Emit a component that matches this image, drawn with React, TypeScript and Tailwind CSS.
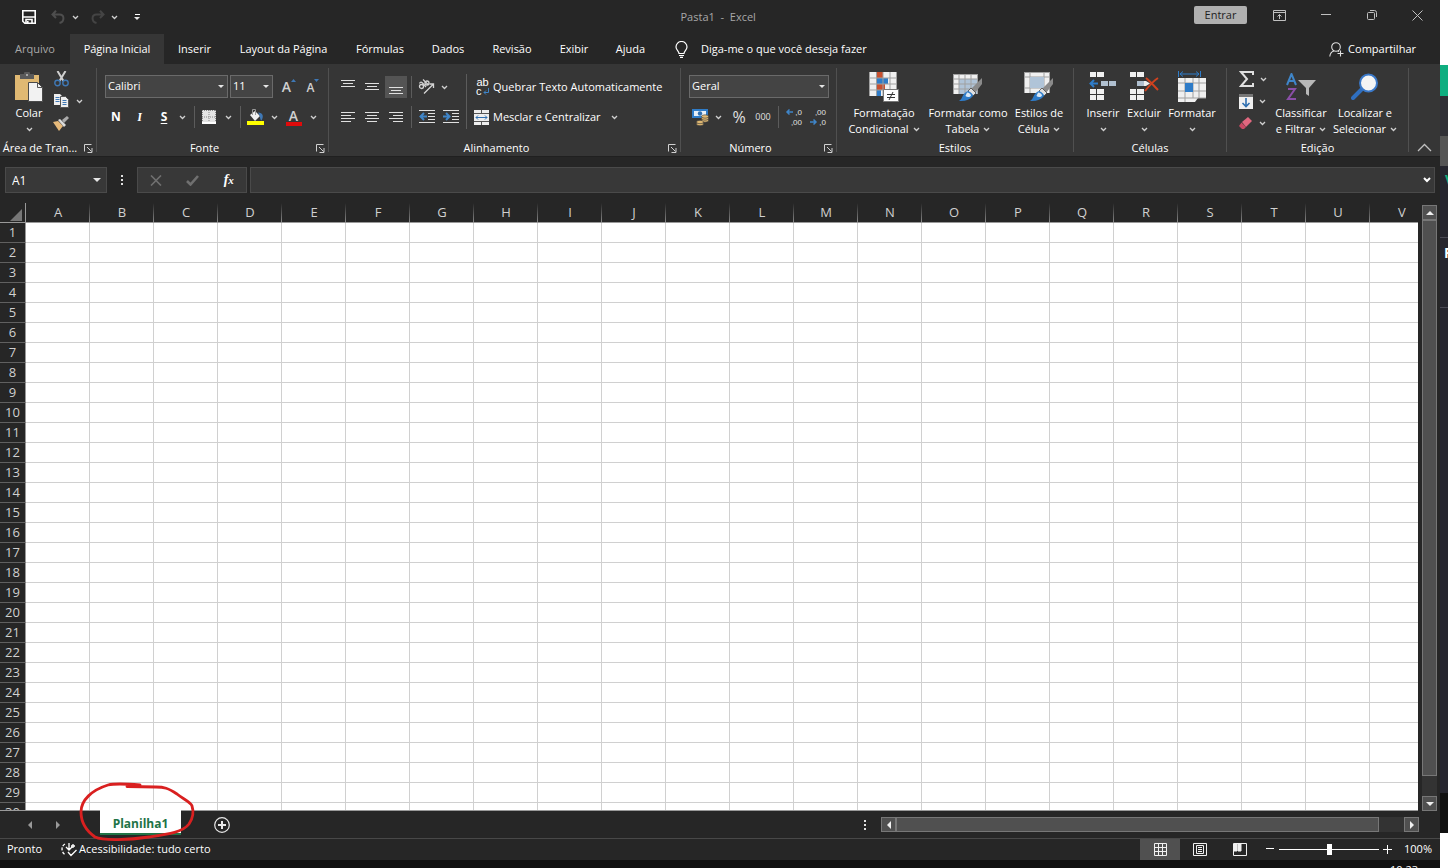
import type { ReactNode } from "react";

const tabs = [
  { name: "Arquivo", style: "w-[70px] text-[#a8a8a8]" },
  { name: "Página Inicial", style: "w-[94px] bg-[#363636] text-white" },
  { name: "Inserir", style: "w-[61px] text-white" },
  { name: "Layout da Página", style: "w-[117px] text-white" },
  { name: "Fórmulas", style: "w-[76px] text-white" },
  { name: "Dados", style: "w-[60px] text-white" },
  { name: "Revisão", style: "w-[68px] text-white" },
  { name: "Exibir", style: "w-[56px] text-white" },
  { name: "Ajuda", style: "w-[57px] text-white" },
];

const columns = "ABCDEFGHIJKLMNOPQRSTUV".split("");
const rows = Array.from({ length: 30 }, (_, i) => i + 1);

function Chevron() {
  return (
    <svg width="7" height="5" viewBox="0 0 7 5" fill="none" stroke="#d0d0d0" strokeWidth="1.300" className="shrink-0">
      <path d="M1 1l2.500 2.500L6 1" />
    </svg>
  );
}

function Triangle({ size = "w-[7px]" }: { size?: string }) {
  return (
    <svg viewBox="0 0 8 4" fill="#e6e6e6" className={size}>
      <path d="M0 0h8L4 4z" />
    </svg>
  );
}

function Tool({ label, w, children }: { label: string; w: string; children: ReactNode }) {
  return (
    <button aria-label={label} className={`flex h-[22px] shrink-0 items-center justify-center ${w}`}>
      {children}
    </button>
  );
}

function Line() {
  return <div className="h-[22px] w-px shrink-0 bg-[#5c5c5c]" />;
}

function Launcher() {
  return (
    <button aria-label="Mais opções" className="flex w-4 justify-center">
      <svg width="9" height="9" viewBox="0 0 9 9" fill="none" stroke="#d0d0d0">
        <path d="M.5 7.500V.5h7M3 3l4.500 4.500M8 4v4.500H3.500" />
      </svg>
    </button>
  );
}

function Group({ title, w, launcher, children }: { title: string; w: string; launcher?: boolean; children: ReactNode }) {
  return (
    <section className={`flex shrink-0 ${w}`}>
      <div className="flex min-w-0 flex-1 flex-col">
        <div className="flex h-[72px]">{children}</div>
        <div className="flex h-4 items-center">
          <h2 className="flex-1 text-center whitespace-nowrap">{title}</h2>
          {launcher && <Launcher />}
        </div>
      </div>
      <div className="h-[84px] w-px bg-[#505050]" />
    </section>
  );
}

/* big ribbon button: icon on top, one or two lines of text */
function BigButton({ lines, w, children }: { lines: string[]; w: string; children: ReactNode }) {
  return (
    <button className={`flex shrink-0 flex-col items-center pt-1 leading-4 whitespace-nowrap ${w}`}>
      <span className="mb-[3px] flex h-[30px] items-center">{children}</span>
      <span>{lines[0]}</span>
      <span className="flex h-4 items-center gap-1">
        {lines[1]}
        <Chevron />
      </span>
    </button>
  );
}

function Lines({ d }: { d: string }) {
  return (
    <svg width="14" height="14" viewBox="0 0 14 14" stroke="#e0e0e0" fill="none">
      <path d={d} />
    </svg>
  );
}

function Brush() {
  return (
    <g>
      <path d="M29 6v6L22 21l-4-4z" fill="#8a8a8a" />
      <path d="M18 16l5 5-3 3-5-5z" fill="#e0e0e0" stroke="#363636" strokeWidth=".7" />
      <path d="M15 19c3 1 5 3 5 5-3 4-8 5.500-14 5 4-2 3-8 9-10z" fill="#2f7cc8" />
      <path d="M14 20.500c2 0 4 1.500 4 3-1 2-4 2-5.500 .5z" fill="#d8e8f6" />
    </g>
  );
}

function TitleBar() {
  return (
    <header className="flex h-[34px] items-center">
      <div className="flex flex-1 items-center pl-[22px]">
        <button aria-label="Salvar">
          <svg width="14" height="14" viewBox="0 0 14 14" fill="none" stroke="#fff" strokeWidth="1.600">
            <path d="M.8.8h12.400v12.400H2.800L.8 11.200zM1 7h12M4 13V9.500h6V13" />
            <path d="M5.800 11v2" />
          </svg>
        </button>
        <button aria-label="Desfazer" className="ml-[15px]">
          <svg width="14" height="14" viewBox="0 0 14 14" fill="none" stroke="#4e4e4e" strokeWidth="2">
            <path d="M5 .8L1.500 4.500 5 8M2 4.500h6.500c5 0 5.500 7 0 8.500" />
          </svg>
        </button>
        <button aria-label="Opções de desfazer" className="ml-[7px]"><Chevron /></button>
        <button aria-label="Refazer" className="ml-3">
          <svg width="14" height="14" viewBox="0 0 14 14" fill="none" stroke="#444" strokeWidth="2">
            <path d="M9 .8l3.500 3.700L9 8M12 4.500H5.500c-5 0-5.500 7 0 8.500" />
          </svg>
        </button>
        <button aria-label="Opções de refazer" className="ml-[6px]"><Chevron /></button>
        <button aria-label="Personalizar barra" className="ml-4 flex flex-col items-center gap-[2px]">
          <span className="h-px w-[5px] bg-white" />
          <Triangle size="w-[6px]" />
        </button>
      </div>
      <h1 className="w-[84px] whitespace-pre text-[#a8a8a8]">Pasta1  -  Excel</h1>
      <div className="flex flex-1 items-center justify-end pr-[17px] pb-1">
        <button className="h-[18px] w-[53px] rounded-xs bg-[#b0b0b0] text-[#1e1e1e]">Entrar</button>
        <button aria-label="Opções da faixa" className="ml-[26px]">
          <svg width="13" height="11" viewBox="0 0 13 11" fill="none" stroke="#c0c0c0">
            <path d="M.5.5h12v10H.5zM.5 2.500h12M6.500 9V4.500M4.500 6.500l2-2 2 2" />
          </svg>
        </button>
        <button aria-label="Minimizar" className="ml-[35px]">
          <svg width="10" height="10" viewBox="0 0 10 10" stroke="#c0c0c0"><path d="M0 4.500h10" /></svg>
        </button>
        <button aria-label="Restaurar" className="ml-9">
          <svg width="10" height="10" viewBox="0 0 10 10" fill="none" stroke="#c0c0c0">
            <rect x=".5" y="2.500" width="7" height="7" rx="1" />
            <path d="M3 .5h4.500a2 2 0 0 1 2 2V7" />
          </svg>
        </button>
        <button aria-label="Fechar" className="ml-[35px]">
          <svg width="11" height="11" viewBox="0 0 11 11" stroke="#c0c0c0"><path d="M.5.5l10 10M10.500.5l-10 10" /></svg>
        </button>
      </div>
    </header>
  );
}

function TabBar() {
  return (
    <nav className="flex h-[30px] items-stretch">
      {tabs.map((tab) => (
        <button key={tab.name} className={`shrink-0 whitespace-nowrap ${tab.style}`}>
          {tab.name}
        </button>
      ))}
      <button className="ml-4 flex items-center gap-[13px] whitespace-nowrap">
        <svg width="13" height="17" viewBox="0 0 13 17" fill="none" stroke="#fff" strokeWidth="1.200">
          <path d="M4 12.500c0-2.500-3-3.500-3-6.500a5.500 5.500 0 0 1 11 0c0 3-3 4-3 6.500zM4 14.500h5M5 16.400h3" />
        </svg>
        Diga-me o que você deseja fazer
      </button>
      <button className="mr-6 ml-auto flex items-center gap-1">
        <svg width="15" height="15" viewBox="0 0 15 15" fill="none" stroke="#e0e0e0" strokeWidth="1.100">
          <circle cx="7" cy="5" r="4.300" />
          <path d="M.8 14.500c.3-3 2-5 4.200-5.500M9 9l1 .6M11.500 8.500v6M8.500 11.500h6" />
        </svg>
        Compartilhar
      </button>
    </nav>
  );
}

function Clipboard() {
  return (
    <Group title="Área de Tran..." w="w-[97px]" launcher>
      <BigButton lines={["Colar"]} w="w-[50px] pl-2 [&>span:last-child]:gap-0">
        <svg width="30" height="30" viewBox="0 0 30 30">
          <path d="M1 3h24v25H1z" fill="#e0b973" />
          <path d="M6 7V2h4a3 3 0 0 1 6 0h4v5z" fill="#5a5a5a" />
          <circle cx="13" cy="3" r="1" fill="#c0c0c0" />
          <path d="M14.500 10.500h9l5 5v14h-14z" fill="#f2f2f2" stroke="#4a4a4a" />
          <path d="M23.500 10.500v5h5" fill="none" stroke="#555" />
        </svg>
      </BigButton>
      <div className="flex flex-col">
        <Tool label="Recortar" w="w-[22px]">
          <svg width="15" height="16" viewBox="0 0 15 16" fill="none">
            <path d="M3.500 0l6 10M11.500 0l-6 10" stroke="#d0d0d0" strokeWidth="2" />
            <circle cx="3.500" cy="12" r="2.700" stroke="#3f78b5" strokeWidth="1.400" />
            <circle cx="11.500" cy="12" r="2.700" stroke="#3f78b5" strokeWidth="1.400" />
          </svg>
        </Tool>
        <div className="flex">
          <Tool label="Copiar" w="w-[22px]">
            <svg width="15" height="14" viewBox="0 0 15 14" stroke="#3f78b5">
              <path d="M0 0h6l2 2v9H0z" fill="#eee" stroke="none" />
              <path d="M1.500 3.500h4M1.500 5.500h4M1.500 7.500h4" />
              <path d="M6.500 2.500h5l3 3v8h-8z" fill="#eee" stroke="#555" />
              <path d="M8.500 6.500h4M8.500 8.500h4M8.500 10.500h4" />
            </svg>
          </Tool>
          <Tool label="Opções de cópia" w="w-[14px]"><Chevron /></Tool>
        </div>
        <Tool label="Pincel" w="w-[22px]">
          <svg width="16" height="15" viewBox="0 0 16 15">
            <path d="M0 6l5-1 5 5-4 5z" fill="#e6b97a" />
            <path d="M5 4l2-1 6 6-2 2z" fill="#ddd" />
            <path d="M9 4l5-4 2 2-5 5z" fill="#aaa" />
          </svg>
        </Tool>
      </div>
    </Group>
  );
}

function FontGroup() {
  return (
    <Group title="Fonte" w="w-[232px]" launcher>
      <div className="flex flex-col gap-2 pt-[7px] pl-2">
        <div className="flex h-[23px] items-center">
          <label className="relative">
            <select aria-label="Fonte" className="h-[23px] w-[123px] appearance-none border border-[#6a6a6a] bg-[#444] pl-[2px]">
              <option>Calibri</option>
            </select>
            <span className="pointer-events-none absolute top-[10px] right-[4px]"><Triangle size="w-[6px]" /></span>
          </label>
          <label className="relative ml-[2px]">
            <select aria-label="Tamanho" className="h-[23px] w-[43px] appearance-none border border-[#6a6a6a] bg-[#444] pl-[2px]">
              <option>11</option>
            </select>
            <span className="pointer-events-none absolute top-[10px] right-[4px]"><Triangle size="w-[6px]" /></span>
          </label>
          <Tool label="Aumentar fonte" w="ml-[4px] w-[24px]">
            <span className="text-sm leading-4 font-semibold text-[#d0d0d0]">A</span>
            <svg width="5" height="16" viewBox="0 0 5 16" fill="#3f78b5"><path d="M0 3l2.500-3L5 3z" /></svg>
          </Tool>
          <Tool label="Diminuir fonte" w="w-[24px]">
            <span className="pt-[2px] text-xs leading-4 font-semibold text-[#d0d0d0]">A</span>
            <svg width="5" height="16" viewBox="0 0 5 16" fill="#3f78b5"><path d="M0 0h5L2.500 3z" /></svg>
          </Tool>
        </div>
        <div className="flex items-center text-xs">
          <Tool label="Negrito" w="w-[22px] font-bold">N</Tool>
          <Tool label="Itálico" w="w-[25px] font-serif italic font-bold">I</Tool>
          <Tool label="Sublinhado" w="w-[24px] font-bold underline underline-offset-2">S</Tool>
          <Tool label="Opções de sublinhado" w="w-[12px]"><Chevron /></Tool>
          <div className="w-[6px]" />
          <Line />
          <Tool label="Bordas" w="w-[28px]">
            <svg width="14" height="14" viewBox="0 0 14 14">
              <path d="M0 0h14v14H0z" fill="#e4e4e4" />
              <path d="M0 .5h14M0 7h14M.5 0v14M7 0v14M13.500 0v14" stroke="#888" strokeDasharray="1 1" />
              <path d="M0 13h14" stroke="#fff" strokeWidth="2" />
            </svg>
          </Tool>
          <Tool label="Opções de bordas" w="w-[10px]"><Chevron /></Tool>
          <div className="w-[7px]" />
          <Line />
          <Tool label="Cor de preenchimento" w="w-[29px]">
            <svg width="17" height="17" viewBox="0 0 17 17">
              <path d="M3 6l5-4 5 5-5 5z" fill="#f0f0f0" />
              <path d="M5.500 6V.5h3V6" fill="none" stroke="#999" />
              <path d="M11 3.500c5 0 6 4 3.500 8-2-1-1-5-3.500-8z" fill="#3f78b5" />
              <path d="M0 12h17v4H0z" fill="#ff0" />
            </svg>
          </Tool>
          <Tool label="Opções de preenchimento" w="w-[8px]"><Chevron /></Tool>
          <Tool label="Cor da fonte" w="w-[31px]">
            <span className="flex w-4 flex-col items-center border-b-4 border-[#e00b0b] text-sm leading-[13px] font-semibold text-[#d0d0d0]">A</span>
          </Tool>
          <Tool label="Opções de cor" w="w-[8px]"><Chevron /></Tool>
        </div>
      </div>
    </Group>
  );
}

function AlignGroup() {
  return (
    <Group title="Alinhamento" w="w-[352px]" launcher>
      <div className="flex flex-col gap-2 pt-2 pl-[7px]">
        <div className="flex items-center">
          <Tool label="Em cima" w="w-6"><Lines d="M0 .5h14M2 3.500h10M0 6.500h14" /></Tool>
          <Tool label="No meio" w="w-6"><Lines d="M0 3.500h14M2 6.500h10M0 9.500h14" /></Tool>
          <Tool label="Embaixo" w="w-[22px] mx-px bg-[#545454]"><Lines d="M0 7.500h14M2 10.500h10M0 13.500h14" /></Tool>
          <div className="w-[3px]" />
          <Line />
          <Tool label="Orientação" w="w-[28px]">
            <svg width="17" height="16" viewBox="0 0 17 16" fill="none" stroke="#d4d4d4" strokeWidth="1.300">
              <circle cx="3.500" cy="7.500" r="2" />
              <path d="M1.500 4.500c1-2 2-1.500 3-.5l3.500 4" />
              <path d="M5 .5l5.500 5.500" />
              <circle cx="9" cy="4" r="2" />
              <path d="M6 14.500l9-9M11.500 5h4v4" />
            </svg>
          </Tool>
          <Tool label="Opções de orientação" w="w-[8px]"><Chevron /></Tool>
        </div>
        <div className="flex items-center">
          <Tool label="À esquerda" w="w-6"><Lines d="M0 2.500h14M0 5.500h10M0 8.500h14M0 11.500h10" /></Tool>
          <Tool label="Centralizar" w="w-6"><Lines d="M0 2.500h14M2 5.500h10M0 8.500h14M2 11.500h10" /></Tool>
          <Tool label="À direita" w="w-6"><Lines d="M0 2.500h14M4 5.500h10M0 8.500h14M4 11.500h10" /></Tool>
          <div className="w-[3px]" />
          <Line />
          <Tool label="Diminuir recuo" w="ml-[3px] w-6">
            <svg width="16" height="14" viewBox="0 0 16 14" fill="none" stroke="#e0e0e0">
              <path d="M0 .5h16M9 3.500h7M9 6.500h7M9 9.500h7M0 12.500h16" />
              <path d="M8 6.500H2M5 3L1.500 6.500 5 10" stroke="#3f85c8" strokeWidth="2" />
            </svg>
          </Tool>
          <Tool label="Aumentar recuo" w="w-6">
            <svg width="16" height="14" viewBox="0 0 16 14" fill="none" stroke="#e0e0e0">
              <path d="M0 .5h16M9 3.500h7M9 6.500h7M9 9.500h7M0 12.500h16" />
              <path d="M0 6.500h6M3 3l3.500 3.500L3 10" stroke="#3f85c8" strokeWidth="2" />
            </svg>
          </Tool>
        </div>
      </div>
      <div className="mt-[6px] ml-[3px] h-[55px] w-px bg-[#5c5c5c]" />
      <div className="flex flex-col gap-2 pt-2 pl-[7px]">
        <button className="flex h-[22px] items-center gap-1 whitespace-nowrap">
          <span className="flex w-[15px] flex-col pl-[2px] font-['Liberation_Sans',sans-serif] text-[11px] leading-[9px]">
            <span>ab</span>
            <span className="flex">
              c
              <svg width="6" height="8" viewBox="0 0 6 8" fill="none" stroke="#3f85c8" className="ml-px"><path d="M5.500 1v4.500H1M3 3.500l-2 2 2 2" /></svg>
            </span>
          </span>
          Quebrar Texto Automaticamente
        </button>
        <button className="flex h-[22px] items-center gap-1 whitespace-nowrap">
          <svg width="15" height="15" viewBox="0 0 15 15">
            <path d="M0 0h15v15H0z" fill="#eee" />
            <path d="M0 3.500h15M0 11.500h15M7.500 0v3.500M7.500 11.500V15" stroke="#555" />
            <path d="M2 7.500h11M4 5.500l-2 2 2 2M11 5.500l2 2-2 2" stroke="#2f6fb0" fill="none" />
          </svg>
          Mesclar e Centralizar
          <span className="pl-[6px]"><Chevron /></span>
        </button>
      </div>
    </Group>
  );
}

function Decimal({ top, bottom, arrow }: { top: string; bottom: string; arrow: string }) {
  return (
    <svg width="17" height="20" viewBox="0 0 17 20" fill="none" stroke="#3f85c8" strokeWidth="1.500" className="overflow-visible">
      <path d={arrow} />
      <g fill="#e0e0e0" stroke="none" fontSize="8" textAnchor="end" className="font-['Liberation_Sans',sans-serif]">
        <text x="16" y="8">{top}</text>
        <text x="16" y="18">{bottom}</text>
      </g>
    </svg>
  );
}

function NumberGroup() {
  return (
    <Group title="Número" w="w-[156px]" launcher>
      <div className="flex flex-col gap-2 pt-[7px] pl-2">
        <label className="relative h-[23px]">
          <select aria-label="Formato" className="h-[23px] w-[140px] appearance-none border border-[#6a6a6a] bg-[#444] pl-[2px]">
            <option>Geral</option>
          </select>
          <span className="pointer-events-none absolute top-[10px] right-[4px]"><Triangle size="w-[6px]" /></span>
        </label>
        <div className="flex items-center">
          <Tool label="Moeda" w="w-[23px]">
            <svg width="17" height="17" viewBox="0 0 17 17">
              <path d="M0 0h16v9H0z" fill="#2f7cc8" />
              <path d="M2 2h12v5H2z" fill="#e8f0f8" />
              <circle cx="8" cy="4.500" r="2.200" fill="#2f6fb0" />
              <g fill="#e0b973" stroke="#363636" strokeWidth=".6">
                <ellipse cx="13" cy="11.500" rx="3.500" ry="1.700" /><ellipse cx="13" cy="9.500" rx="3.500" ry="1.700" />
                <ellipse cx="13" cy="7.500" rx="3.500" ry="1.700" /><ellipse cx="8" cy="15" rx="3.500" ry="1.700" />
                <ellipse cx="8" cy="13" rx="3.500" ry="1.700" />
              </g>
            </svg>
          </Tool>
          <Tool label="Opções de moeda" w="w-[12px]"><Chevron /></Tool>
          <Tool label="Porcentagem" w="w-[30px] text-base text-[#e0e0e0]">%</Tool>
          <Tool label="Milhar" w="w-[18px] text-[9px] text-[#e0e0e0]">000</Tool>
          <div className="w-[6px]" />
          <Line />
          <Tool label="Aumentar casas" w="ml-[3px] w-[25px]"><Decimal top=",0" bottom=",00" arrow="M7 5H1M3.500 2.500L1 5l2.500 2.500" /></Tool>
          <Tool label="Diminuir casas" w="w-[22px]"><Decimal top=",00" bottom=",0" arrow="M0 15h6M3.500 12.500L6 15l-2.500 2.500" /></Tool>
        </div>
      </div>
    </Group>
  );
}

function StylesGroup() {
  return (
    <Group title="Estilos" w="w-[237px]">
      <div className="flex pl-[7px]">
        <BigButton lines={["Formatação", "Condicional"]} w="w-[80px]">
          <svg width="30" height="30" viewBox="0 0 30 30">
            <path d="M0 0h28v24H0z" fill="#f0f0f0" />
            <path d="M8 0h6v6H8zM8 12h8v6H8z" fill="#c8502f" />
            <path d="M8 6h11v6H8zM8 18h4v6H8z" fill="#2f7cc8" />
            <path d="M0 6h28M0 12h28M0 18h28M7.500 0v24M14 0v24M21 0v24M.5 0v24M27.500 0v24" stroke="#a0a0a0" fill="none" />
            <path d="M14.500 17.500h15v12h-15z" fill="#fff" stroke="#777" />
            <path d="M18 22.500h8M18 25.500h8M24 20l-4 8" stroke="#333" />
          </svg>
        </BigButton>
        <BigButton lines={["Formatar como", "Tabela"]} w="w-[88px]">
          <svg width="30" height="30" viewBox="0 0 30 30">
            <path d="M0 2h25v20H0z" fill="#f0f0f0" />
            <path d="M6 7h19v15H6z" fill="#b0c4d8" />
            <path d="M0 2.500h25M0 7h25M0 12h25M0 17h25M.5 2v20M6 2v20M12 2v20M18 2v20M24.500 2v20" stroke="#a0a0a0" fill="none" />
            <Brush />
          </svg>
        </BigButton>
        <BigButton lines={["Estilos de", "Célula"]} w="w-[54px]">
          <svg width="30" height="30" viewBox="0 0 30 30">
            <path d="M0 0h26v21H0z" fill="#f0f0f0" />
            <path d="M0 .5h26M0 5h26M0 16h26M.5 0v21M6 0v21M20 0v21M25.500 0v21" stroke="#a0a0a0" fill="none" />
            <path d="M6 5h14v11H6z" fill="#b0c4d8" />
            <Brush />
          </svg>
        </BigButton>
      </div>
    </Group>
  );
}

function CellsGroup() {
  return (
    <Group title="Células" w="w-[153px]">
      <div className="flex pl-[9px]">
        <BigButton lines={["Inserir"]} w="w-[40px] [&>span:last-child]:gap-0">
          <svg width="28" height="30" viewBox="0 0 28 30" fill="#f0f0f0">
            <path d="M1 0h6v5H1zM8 0h7v5H8zM1 17h6v5H1zM8 17h7v5H8zM1 23h6v5H1zM8 23h7v5H8z" />
            <path d="M12 9h7v5h-7zM20 9h7v5h-7z" fill="#b0c0d0" />
            <path d="M9 11.500H2M5 8l-3.500 3.500L5 15" stroke="#2f7cc8" strokeWidth="2" fill="none" />
          </svg>
        </BigButton>
        <BigButton lines={["Excluir"]} w="w-[42px]">
          <svg width="30" height="30" viewBox="0 0 30 30" fill="#f0f0f0">
            <path d="M1 0h6v5H1zM8 0h7v5H8zM1 17h6v5H1zM8 17h7v5H8zM1 23h6v5H1zM8 23h7v5H8z" />
            <path d="M8 9h7v5H8z" fill="#b0c0d0" />
            <path d="M15 9h2l4 2.500-4 2.500h-2z" />
            <path d="M17 6c4 3 8 8 12 12M29 6c-5 3-9 8-13 13" stroke="#d0421f" strokeWidth="2" fill="none" />
          </svg>
        </BigButton>
        <BigButton lines={["Formatar"]} w="w-[54px]">
          <svg width="28" height="32" viewBox="0 0 28 32">
            <path d="M.5 0v6M22.500 0v6M2 3h19M5 .5L2 3l3 2.500M18 .5L21 3l-3 2.500" stroke="#2f7cc8" fill="none" />
            <path d="M0 7h28v20h-8l-3 4H0z" fill="#f0f0f0" />
            <path d="M0 12h28M0 20h28M0 27h28M7 7v24M15 7v20M21 7v20" stroke="#a0a0a0" fill="none" />
            <path d="M7 12h8v9H7z" fill="#2f7cc8" />
          </svg>
        </BigButton>
      </div>
    </Group>
  );
}

function EditGroup() {
  return (
    <Group title="Edição" w="w-[182px]">
      <div className="flex w-[44px] flex-col pl-[7px]">
        <Tool label="Soma" w="w-[37px] gap-[6px]">
          <svg width="15" height="16" viewBox="0 0 15 16" fill="none" stroke="#e0e0e0" strokeWidth="2">
            <path d="M14 4V1H2l6 7-6 7h12v-3" />
          </svg>
          <Chevron />
        </Tool>
        <Tool label="Preencher" w="w-[37px] gap-[6px]">
          <svg width="14" height="15" viewBox="0 0 14 15">
            <path d="M0 0h14v3H0z" fill="#777" />
            <path d="M0 3h14v12H0z" fill="#f0f0f0" />
            <path d="M7 4v8M3.500 9L7 12.500 10.500 9" stroke="#2f6fb0" strokeWidth="1.600" fill="none" />
          </svg>
          <Chevron />
        </Tool>
        <Tool label="Limpar" w="w-[37px] gap-[6px]">
          <svg width="14" height="14" viewBox="0 0 14 14">
            <path d="M3 6l6-5 4 4-6 6z" fill="#e0687f" />
            <path d="M2.500 6.500l4.500 4.500-2 2H3l-3-3z" fill="#c84a64" />
          </svg>
          <Chevron />
        </Tool>
      </div>
      <BigButton lines={["Classificar", "e Filtrar"]} w="w-[60px]">
        <svg width="30" height="28" viewBox="0 0 30 28" fill="none" strokeWidth="2">
          <path d="M1 12L5.500 1 10 12M2.500 8h6" stroke="#3f85c8" />
          <path d="M2 16h7L2 26h8" stroke="#8b4fa8" />
          <path d="M12 7h18l-7 8v8l-3-2v-6z" fill="#b8b8b8" />
        </svg>
      </BigButton>
      <BigButton lines={["Localizar e", "Selecionar"]} w="w-[68px]">
        <svg width="28" height="28" viewBox="0 0 28 28">
          <path d="M11 16l-9 9" stroke="#2f6fc0" strokeWidth="4" strokeLinecap="round" />
          <circle cx="17.500" cy="10" r="8.500" fill="#f4f4f4" stroke="#3a78c8" strokeWidth="2" />
        </svg>
      </BigButton>
    </Group>
  );
}

function Ribbon() {
  return (
    <div className="flex h-[93px] shrink-0 border-b border-[#202020] bg-[#363636] pt-1">
      <Clipboard />
      <FontGroup />
      <AlignGroup />
      <NumberGroup />
      <StylesGroup />
      <CellsGroup />
      <EditGroup />
      <button aria-label="Recolher" className="mt-auto mr-2 mb-1 ml-auto">
        <svg width="15" height="9" viewBox="0 0 15 9" fill="none" stroke="#c0c0c0" strokeWidth="1.300">
          <path d="M1 8l6.500-6.500L14 8" />
        </svg>
      </button>
    </div>
  );
}

function FormulaBar() {
  return (
    <div className="flex h-[46px] shrink-0 items-center pr-[5px] pl-[5px]">
      <label className="relative">
        <input aria-label="Caixa de nome" defaultValue="A1" className="block h-[26px] w-[102px] border border-[#4a4a4a] bg-[#383838] pl-[6px] text-xs" />
        <span className="absolute top-[11px] right-[6px]"><Triangle size="w-2" /></span>
      </label>
      <svg width="30" height="12" viewBox="0 0 30 12" fill="#e0e0e0">
        <path d="M14 1h2v2h-2zM14 5h2v2h-2zM14 9h2v2h-2z" />
      </svg>
      <div className="flex h-[26px] w-[110px] items-center justify-around border border-[#4a4a4a] bg-[#383838]">
        <button aria-label="Cancelar">
          <svg width="12" height="11" viewBox="0 0 12 11" stroke="#707070" strokeWidth="1.600"><path d="M1 .5l10 10M11 .5l-10 10" /></svg>
        </button>
        <button aria-label="Confirmar">
          <svg width="13" height="11" viewBox="0 0 13 11" stroke="#707070" strokeWidth="2.600" fill="none"><path d="M1 6l3.500 3.500L12 1" /></svg>
        </button>
        <button aria-label="Inserir função" className="font-['Liberation_Serif',serif] text-sm leading-4 font-bold italic">
          f<span className="text-[11px]">x</span>
        </button>
      </div>
      <label className="relative ml-[3px] flex-1">
        <input aria-label="Fórmula" className="block h-[26px] w-full border border-[#4a4a4a] bg-[#383838] px-2" />
        <svg width="8" height="6" viewBox="0 0 8 6" fill="none" stroke="#fff" strokeWidth="2" className="absolute top-[10px] right-1">
          <path d="M1 1l3 3 3-3" />
        </svg>
      </label>
    </div>
  );
}

function Arrow({ d, label }: { d: string; label: string }) {
  return (
    <button aria-label={label} className="flex h-[15px] w-[15px] shrink-0 items-center justify-center border border-[#777] bg-[#505050]">
      <svg width="8" height="8" viewBox="0 0 8 8" fill="#f0f0f0"><path d={d} /></svg>
    </button>
  );
}

function Sheet() {
  return (
    <div className="flex min-h-0 flex-1">
      <div className="min-w-0 flex-1 overflow-hidden border-b border-[#999]">
        <table className="w-[1434px] table-fixed border-separate border-spacing-0 bg-white text-[13px] text-[#d0d0d0]">
          <thead>
            <tr className="bg-[#262626] leading-[19px]">
              <th className="w-[26px] border-r border-b border-[#999] p-0">
                <svg width="12" height="12" viewBox="0 0 12 12" fill="#777" className="mt-1 mr-[3px] ml-auto"><path d="M12 0v12H0z" /></svg>
              </th>
              {columns.map((name) => (
                <th key={name} className="w-16 border-b border-[#999] bg-[linear-gradient(#262626,#888)] bg-[length:1px_100%] bg-right bg-no-repeat p-0 font-normal">
                  {name}
                </th>
              ))}
            </tr>
          </thead>
          <tbody>
            {rows.map((row) => (
              <tr key={row} className="h-5">
                <th className="border-r border-b border-r-[#999] border-b-[#606060] bg-[#262626] p-0 leading-[19px] font-normal">{row}</th>
                {columns.map((name) => (
                  <td key={name} className="border-r border-b border-[#d0d0d0] p-0" />
                ))}
              </tr>
            ))}
          </tbody>
        </table>
      </div>
      <div className="mt-[2px] mr-[3px] ml-1 flex w-[15px] flex-col bg-[#333]">
        <Arrow label="Rolar para cima" d="M0 6h8L4 2z" />
        <div className="mb-5 flex-1 border border-[#777] bg-[#505050]" />
        <Arrow label="Rolar para baixo" d="M0 2h8L4 6z" />
      </div>
    </div>
  );
}

function SheetBar() {
  return (
    <div className="relative flex h-[27px] shrink-0 items-center pr-[21px]">
      <button aria-label="Planilha anterior" className="pl-[26px]">
        <svg width="8" height="8" viewBox="0 0 8 8" fill="#999"><path d="M6 0v8L2 4z" /></svg>
      </button>
      <button aria-label="Próxima planilha" className="pl-5">
        <svg width="8" height="8" viewBox="0 0 8 8" fill="#999"><path d="M2 0v8l4-4z" /></svg>
      </button>
      <button className="-mt-px ml-[38px] h-[25px] w-[81px] self-start border-b-2 border-[#217346] bg-white pt-1 text-xs font-bold text-[#217346]">
        Planilha1
      </button>
      <button aria-label="Nova planilha" className="ml-[33px]">
        <svg width="16" height="16" viewBox="0 0 16 16" fill="none" stroke="#e8e8e8">
          <circle cx="8" cy="8" r="7.300" strokeWidth="1.200" />
          <path d="M4 8h8M8 4v8" strokeWidth="2" />
        </svg>
      </button>
      <svg width="4" height="12" viewBox="0 0 4 12" fill="#e0e0e0" className="mr-[14px] ml-auto">
        <path d="M1 1h2v2H1zM1 5h2v2H1zM1 9h2v2H1z" />
      </svg>
      <div className="flex w-[538px] min-w-0 bg-[#333]">
        <Arrow label="Rolar para a esquerda" d="M6 0v8L2 4z" />
        <div className="mr-[25px] flex-1 border border-[#777] bg-[#505050]" />
        <Arrow label="Rolar para a direita" d="M2 0v8l4-4z" />
      </div>
      {/* red hand-drawn circle round the sheet tab */}
      <svg width="122" height="64" viewBox="0 0 122 64" fill="none" stroke="#d92020" strokeWidth="2.800" strokeLinecap="round" className="pointer-events-none absolute -top-[31px] left-[76px]">
        <path d="M64 5C52 4 40 3 32 5 16 10 5 20 5 32c0 12 7 20 14 25 8 4 34 3 54 0 20-3 34-5 40-13 4-6 5-12 3-18-1-4-9-7-15-12-9-6-13-7-21-7l-29-.5" />
      </svg>
    </div>
  );
}

function StatusBar() {
  return (
    <footer className="flex h-[22px] shrink-0 items-center border-t border-[#484848] pr-2 pl-[7px]">
      <span className="w-[54px]">Pronto</span>
      <button className="flex items-center gap-[2px] whitespace-nowrap">
        <svg width="16" height="15" viewBox="0 0 16 15" fill="none" stroke="#fff" strokeWidth="1.300">
          <path d="M4 2C0 4 0 10 4 12.500" strokeDasharray="3 1.500" />
          <path d="M8 1v7M5 5l3 3 3-3M12 2v4M10 4h4M7 10l3 3.500L15.500 8" />
        </svg>
        Acessibilidade: tudo certo
      </button>
      <div className="ml-auto flex h-full items-center">
        <button aria-label="Normal" className="flex h-full w-10 items-center justify-center bg-[#505050]">
          <svg width="13" height="13" viewBox="0 0 13 13" fill="none" stroke="#f0f0f0"><path d="M.5.5h12v12H.5zM.5 4.500h12M.5 8.500h12M4.500.5v12M8.500.5v12" /></svg>
        </button>
        <button aria-label="Layout da Página" className="flex w-10 justify-center">
          <svg width="14" height="13" viewBox="0 0 14 13" fill="none" stroke="#f0f0f0"><path d="M.5.5h13v12H.5zM3.500 2.500h7v8h-7zM5 4.500h4M5 6.500h4M5 8.500h4" /></svg>
        </button>
        <button aria-label="Quebra de Página" className="flex w-10 justify-center">
          <svg width="14" height="13" viewBox="0 0 14 13" fill="none" stroke="#f0f0f0"><path d="M.5.5h13v12H.5z" /><path d="M1 1h3v7H1zM5 1h3v7H5z" fill="#f0f0f0" /></svg>
        </button>
        <button aria-label="Diminuir zoom" className="flex w-[19px] justify-end">
          <svg width="13" height="9" viewBox="0 0 13 9" stroke="#fff"><path d="M0 3.500h8" /></svg>
        </button>
        <input
          type="range"
          aria-label="Zoom"
          defaultValue={50}
          className="h-3 w-[100px] appearance-none bg-[linear-gradient(#fff,#fff)] bg-[length:100%_1px] bg-center bg-no-repeat [&::-webkit-slider-thumb]:h-[11px] [&::-webkit-slider-thumb]:w-[5px] [&::-webkit-slider-thumb]:appearance-none [&::-webkit-slider-thumb]:bg-white"
        />
        <button aria-label="Aumentar zoom" className="flex w-[25px] pl-1">
          <svg width="9" height="9" viewBox="0 0 9 9" stroke="#fff"><path d="M0 4.500h9M4.500 0v9" /></svg>
        </button>
        <span className="w-[28px] text-right">100%</span>
      </div>
    </footer>
  );
}

/* edge of the window that sits behind */
function Backdrop() {
  return (
    <aside className="flex w-2 shrink-0 flex-col overflow-hidden bg-white">
      <div className="h-[65px] bg-white" />
      <div className="h-[31px] bg-[#0fae80]" />
      <div className="h-10 bg-[#303036]" />
      <div className="h-[30px] bg-[#555]" />
      <div className="h-[72px] border-b border-[#4a4a55] bg-[#26262f] pt-1 pl-[5px] text-sm font-bold text-[#0fae80]">V</div>
      <div className="h-[70px] border-b border-[#4a4a55] bg-[#26262f] pt-[5px] pl-1 text-sm font-bold">P</div>
      <div className="flex-1 bg-[#26262f]" />
      <div className="h-10 bg-[#111]" />
      <div className="h-[35px] bg-white" />
    </aside>
  );
}

export default function App() {
  return (
    <div className="flex h-screen overflow-hidden bg-[#262626] font-['Open_Sans','Noto_Sans',sans-serif] text-[11px] font-medium text-white">
      <main className="flex min-w-0 flex-1 flex-col">
        <TitleBar />
        <TabBar />
        <Ribbon />
        <FormulaBar />
        <Sheet />
        <SheetBar />
        <StatusBar />
        <div className="h-2 shrink-0 overflow-hidden bg-[#111] pt-[2px] pr-[22px] text-right">10:23</div>
      </main>
      <Backdrop />
    </div>
  );
}
